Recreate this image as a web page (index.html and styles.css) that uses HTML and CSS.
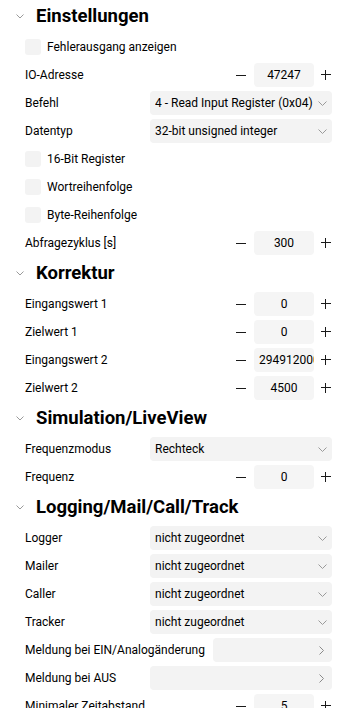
FILE: index.html
```html
<!DOCTYPE html>
<html lang="de">
<head>
<meta charset="utf-8">
<title>Einstellungen</title>
<link rel="stylesheet" href="styles.css">
</head>
<body>
<div class="panel">

  <div class="sec-head">
    <svg class="sec-chev" width="8" height="5" viewBox="0 0 8 5"><path d="M0.5 0.5 L4 4 L7.5 0.5" fill="none" stroke="#9a9a9a" stroke-width="1"/></svg>
    <span class="sec-title">Einstellungen</span>
  </div>
  <div class="row"><span class="cb"></span><span class="cb-label">Fehlerausgang anzeigen</span></div>
  <div class="row"><span class="label">IO-Adresse</span><div class="stepper"><span class="minus"></span><div class="num">47247</div><span class="plus"></span></div></div>
  <div class="row"><span class="label">Befehl</span><div class="select"><span class="sel-text">4 - Read Input Register (0x04)</span><svg class="sel-chev" width="9" height="5" viewBox="0 0 9 5"><path d="M0.5 0.5 L4.5 4.5 L8.5 0.5" fill="none" stroke="#9a9a9a" stroke-width="1"/></svg></div></div>
  <div class="row"><span class="label">Datentyp</span><div class="select"><span class="sel-text">32-bit unsigned integer</span><svg class="sel-chev" width="9" height="5" viewBox="0 0 9 5"><path d="M0.5 0.5 L4.5 4.5 L8.5 0.5" fill="none" stroke="#9a9a9a" stroke-width="1"/></svg></div></div>
  <div class="row"><span class="cb"></span><span class="cb-label">16-Bit Register</span></div>
  <div class="row"><span class="cb"></span><span class="cb-label">Wortreihenfolge</span></div>
  <div class="row"><span class="cb"></span><span class="cb-label">Byte-Reihenfolge</span></div>
  <div class="row"><span class="label">Abfragezyklus [s]</span><div class="stepper"><span class="minus"></span><div class="num">300</div><span class="plus"></span></div></div>

  <div class="sec-head">
    <svg class="sec-chev" width="8" height="5" viewBox="0 0 8 5"><path d="M0.5 0.5 L4 4 L7.5 0.5" fill="none" stroke="#9a9a9a" stroke-width="1"/></svg>
    <span class="sec-title">Korrektur</span>
  </div>
  <div class="row"><span class="label">Eingangswert 1</span><div class="stepper"><span class="minus"></span><div class="num">0</div><span class="plus"></span></div></div>
  <div class="row"><span class="label">Zielwert 1</span><div class="stepper"><span class="minus"></span><div class="num">0</div><span class="plus"></span></div></div>
  <div class="row"><span class="label">Eingangswert 2</span><div class="stepper"><span class="minus"></span><div class="num num-long">294912000</div><span class="plus"></span></div></div>
  <div class="row"><span class="label">Zielwert 2</span><div class="stepper"><span class="minus"></span><div class="num">4500</div><span class="plus"></span></div></div>

  <div class="sec-head">
    <svg class="sec-chev" width="8" height="5" viewBox="0 0 8 5"><path d="M0.5 0.5 L4 4 L7.5 0.5" fill="none" stroke="#9a9a9a" stroke-width="1"/></svg>
    <span class="sec-title">Simulation/LiveView</span>
  </div>
  <div class="row"><span class="label">Frequenzmodus</span><div class="select"><span class="sel-text">Rechteck</span><svg class="sel-chev" width="9" height="5" viewBox="0 0 9 5"><path d="M0.5 0.5 L4.5 4.5 L8.5 0.5" fill="none" stroke="#9a9a9a" stroke-width="1"/></svg></div></div>
  <div class="row"><span class="label">Frequenz</span><div class="stepper"><span class="minus"></span><div class="num">0</div><span class="plus"></span></div></div>

  <div class="sec-head">
    <svg class="sec-chev" width="8" height="5" viewBox="0 0 8 5"><path d="M0.5 0.5 L4 4 L7.5 0.5" fill="none" stroke="#9a9a9a" stroke-width="1"/></svg>
    <span class="sec-title">Logging/Mail/Call/Track</span>
  </div>
  <div class="row"><span class="label">Logger</span><div class="select"><span class="sel-text">nicht zugeordnet</span><svg class="sel-chev" width="9" height="5" viewBox="0 0 9 5"><path d="M0.5 0.5 L4.5 4.5 L8.5 0.5" fill="none" stroke="#9a9a9a" stroke-width="1"/></svg></div></div>
  <div class="row"><span class="label">Mailer</span><div class="select"><span class="sel-text">nicht zugeordnet</span><svg class="sel-chev" width="9" height="5" viewBox="0 0 9 5"><path d="M0.5 0.5 L4.5 4.5 L8.5 0.5" fill="none" stroke="#9a9a9a" stroke-width="1"/></svg></div></div>
  <div class="row"><span class="label">Caller</span><div class="select"><span class="sel-text">nicht zugeordnet</span><svg class="sel-chev" width="9" height="5" viewBox="0 0 9 5"><path d="M0.5 0.5 L4.5 4.5 L8.5 0.5" fill="none" stroke="#9a9a9a" stroke-width="1"/></svg></div></div>
  <div class="row"><span class="label">Tracker</span><div class="select"><span class="sel-text">nicht zugeordnet</span><svg class="sel-chev" width="9" height="5" viewBox="0 0 9 5"><path d="M0.5 0.5 L4.5 4.5 L8.5 0.5" fill="none" stroke="#9a9a9a" stroke-width="1"/></svg></div></div>
  <div class="row"><span class="label">Meldung bei EIN/Analogänderung</span><div class="select"><span class="sel-text"></span><svg class="nav-chev" width="5" height="9" viewBox="0 0 5 9"><path d="M0.5 0.5 L4.5 4.5 L0.5 8.5" fill="none" stroke="#8a8a8a" stroke-width="1"/></svg></div></div>
  <div class="row"><span class="label">Meldung bei AUS</span><div class="select"><span class="sel-text"></span><svg class="nav-chev" width="5" height="9" viewBox="0 0 5 9"><path d="M0.5 0.5 L4.5 4.5 L0.5 8.5" fill="none" stroke="#8a8a8a" stroke-width="1"/></svg></div></div>
  <div class="row"><span class="label">Minimaler Zeitabstand</span><div class="stepper"><span class="minus"></span><div class="num">5</div><span class="plus"></span></div></div>

</div>
</body>
</html>
```

FILE: styles.css
```css
html, body {
  margin: 0;
  padding: 0;
  background: #ffffff;
}
body {
  font-family: "Roboto", "Liberation Sans", sans-serif;
  font-size: 12px;
  color: #000000;
  overflow: hidden;
}
.panel {
  width: 347px;
}
.sec-head {
  display: flex;
  align-items: center;
  height: 33px;
  padding-left: 16px;
  box-sizing: border-box;
  padding-bottom: 1px;
}
.sec-chev {
  flex: none;
  margin-right: 12px;
  margin-top: 1px;
}
.sec-title {
  font-weight: 700;
  font-size: 18.5px;
  line-height: 24px;
}
.row {
  display: flex;
  align-items: center;
  height: 28px;
  padding-left: 25px;
  padding-right: 15px;
  box-sizing: border-box;
}
.label {
  flex: none;
  min-width: 117px;
  margin-right: 8px;
  white-space: nowrap;
}
.cb {
  flex: none;
  width: 16px;
  height: 16px;
  background: #f3f3f3;
  border-radius: 3px;
  margin-right: 6px;
}
.cb-label {
  white-space: nowrap;
}
.select {
  flex: 1;
  height: 24px;
  background: #f3f3f3;
  border-radius: 4px;
  display: flex;
  align-items: center;
  padding: 0 5px 0 5px;
  box-sizing: border-box;
  min-width: 0;
}
.sel-text {
  flex: 1;
  white-space: nowrap;
  overflow: hidden;
}
.sel-chev {
  flex: none;
}
.nav-chev {
  flex: none;
  margin-right: 3px;
}
.stepper {
  margin-left: auto;
  display: flex;
  align-items: center;
}
.minus {
  width: 10px;
  height: 1px;
  background: #1a1a1a;
  margin-right: 8px;
}
.plus {
  position: relative;
  width: 10px;
  height: 10px;
  margin-left: 7px;
  margin-right: 1px;
}
.plus::before,
.plus::after {
  content: "";
  position: absolute;
  background: #1a1a1a;
}
.plus::before {
  left: 0;
  top: 4px;
  width: 10px;
  height: 1px;
}
.plus::after {
  left: 4px;
  top: 0;
  width: 1px;
  height: 10px;
}
.num {
  width: 60px;
  height: 24px;
  line-height: 24px;
  background: #f5f5f5;
  border-radius: 4px;
  text-align: center;
  white-space: nowrap;
  overflow: hidden;
  box-sizing: border-box;
}
.num-long {
  text-align: left;
  padding-left: 5px;
  padding-right: 3px;
  text-overflow: clip;
}
```
